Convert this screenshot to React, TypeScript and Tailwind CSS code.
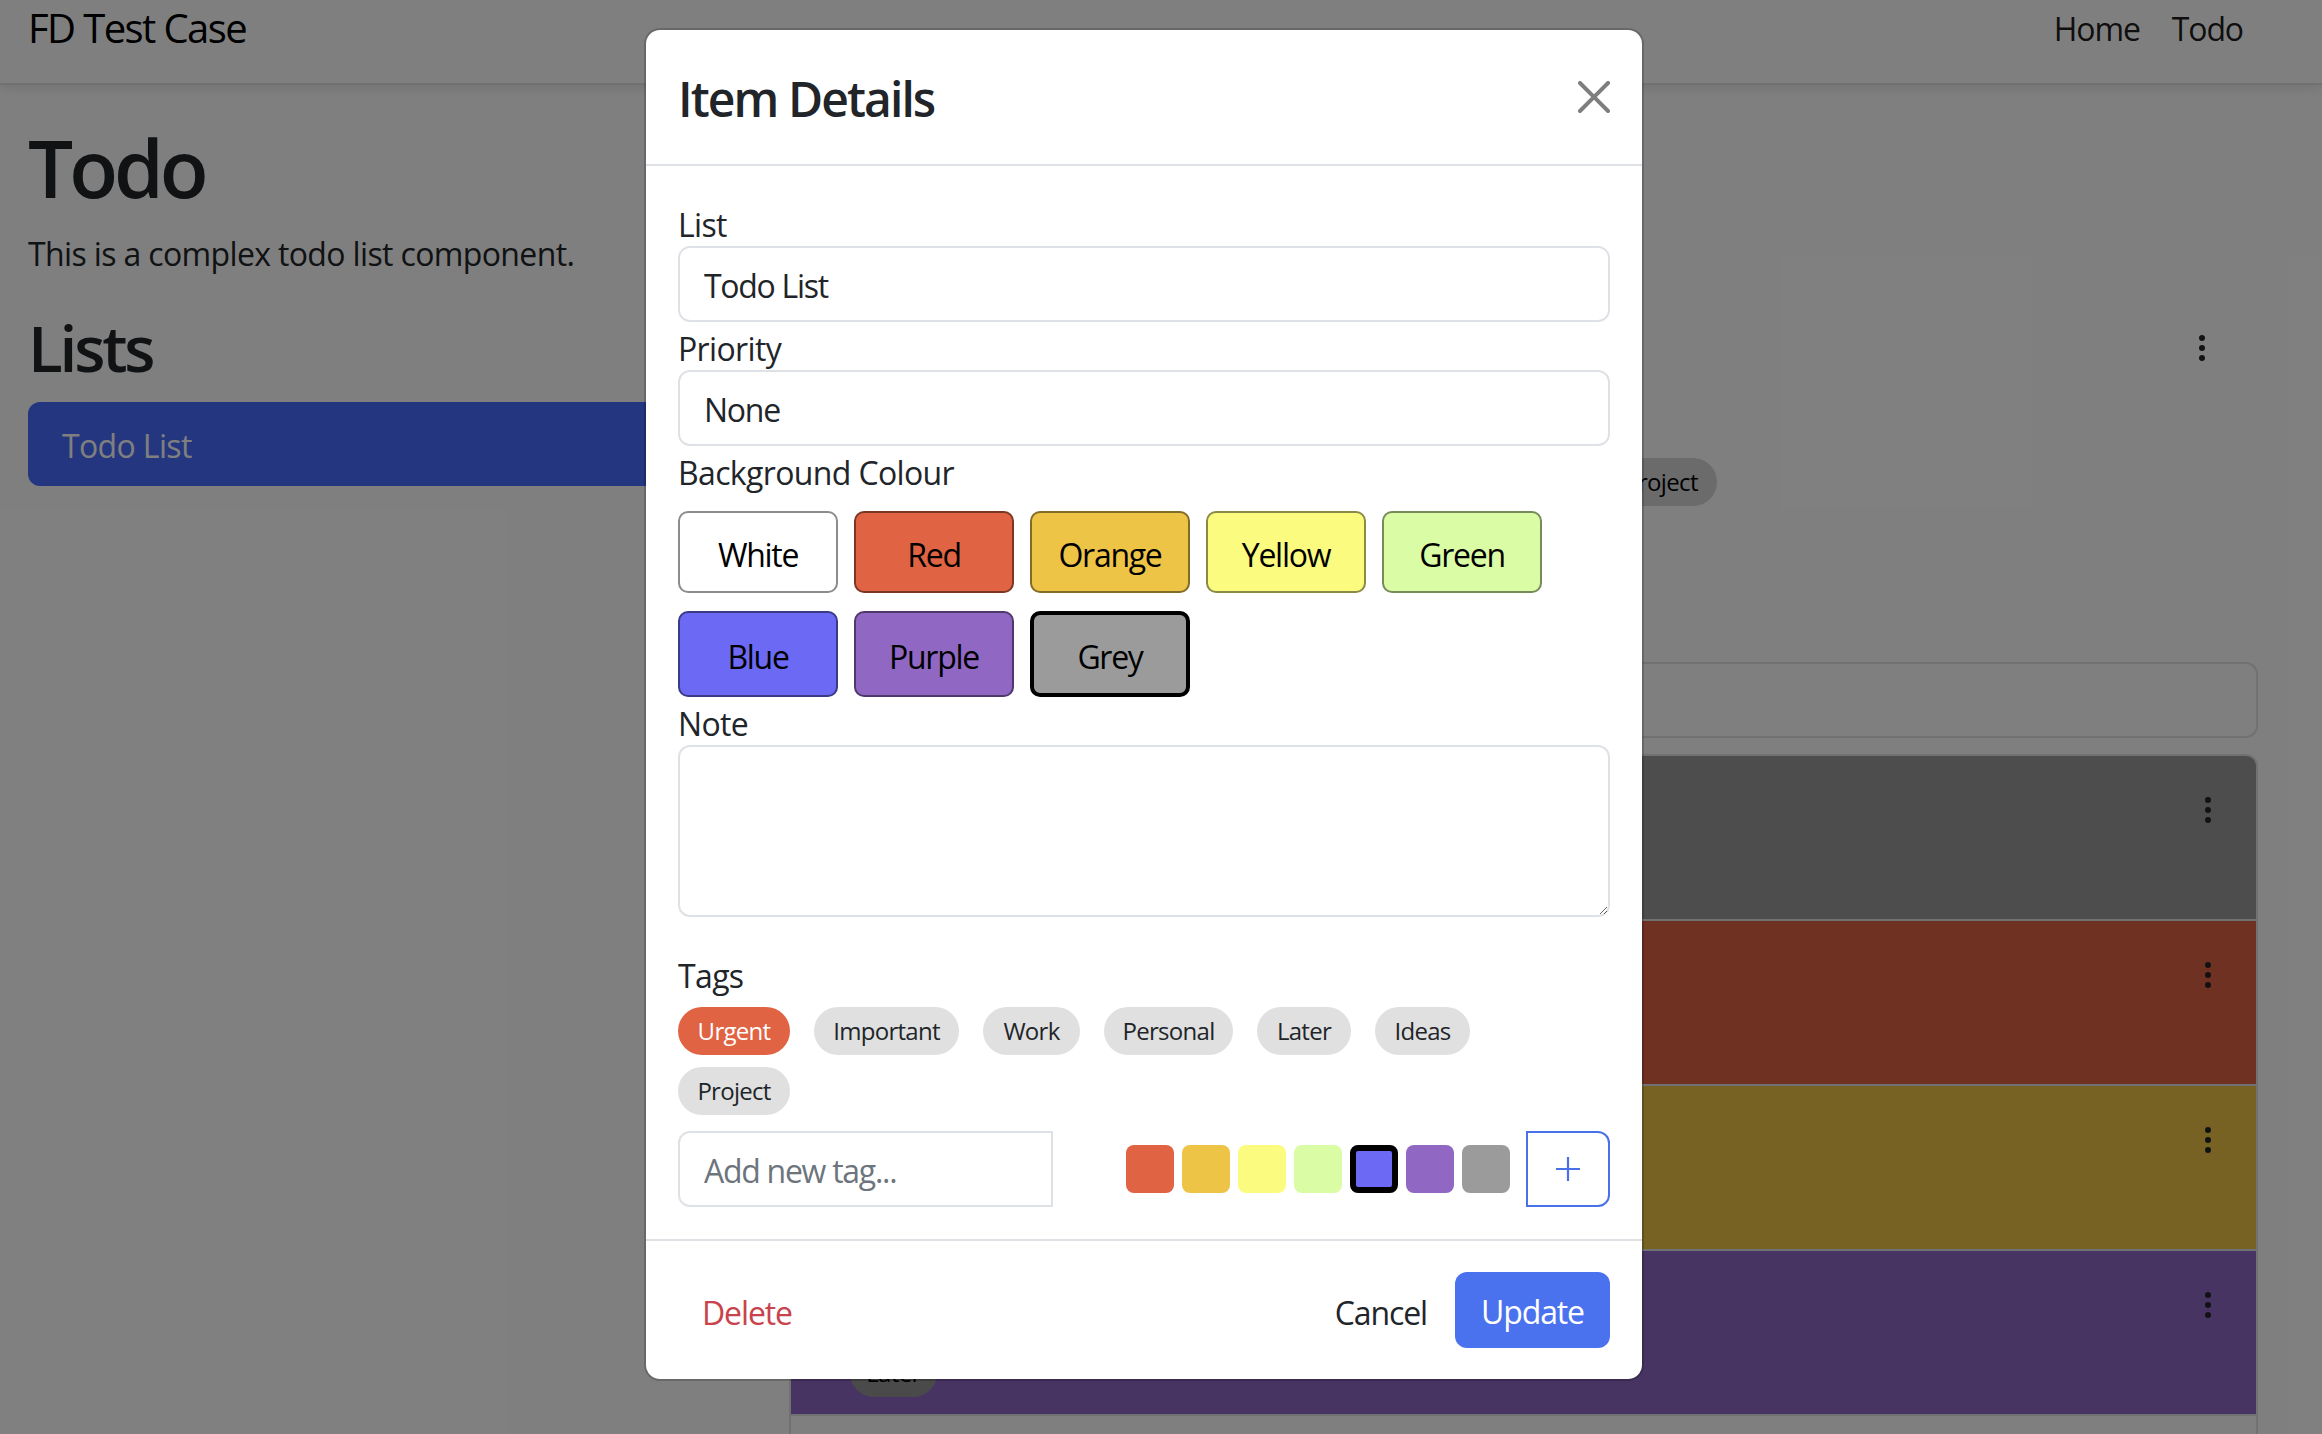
import React from 'react'

const colourButtons = [
  { name: 'White', cls: 'bg-white border-2 border-black/45' },
  { name: 'Red', cls: 'bg-[#e06343] border-2 border-black/45' },
  { name: 'Orange', cls: 'bg-[#eec446] border-2 border-black/45' },
  { name: 'Yellow', cls: 'bg-[#fbfc7f] border-2 border-black/45' },
  { name: 'Green', cls: 'bg-[#dafca5] border-2 border-black/45' },
  { name: 'Blue', cls: 'bg-[#6c6af5] border-2 border-black/45' },
  { name: 'Purple', cls: 'bg-[#9068c4] border-2 border-black/45' },
  { name: 'Grey', cls: 'bg-[#9b9b9b] border-4 border-black' },
]

const swatches = [
  'bg-[#e06343]',
  'bg-[#eec446]',
  'bg-[#fbfc7f]',
  'bg-[#dafca5]',
  'bg-[#6c6af5] border-[6px] border-black',
  'bg-[#9068c4]',
  'bg-[#9b9b9b]',
]

const tags = [
  { name: 'Urgent', w: 'w-[112px]', active: true },
  { name: 'Important', w: 'w-[145px]' },
  { name: 'Work', w: 'w-[97px]' },
  { name: 'Personal', w: 'w-[129px]' },
  { name: 'Later', w: 'w-[94px]' },
  { name: 'Ideas', w: 'w-[95px]' },
  { name: 'Project', w: 'w-[112px]' },
]

// rows of the list behind the modal; only their right ends show
const items = [
  { id: 1, bg: 'bg-[#9a9a9a] rounded-t-[12px]', tag: '' },
  { id: 2, bg: 'bg-[#de6444]', tag: '' },
  { id: 3, bg: 'bg-[#eec446]', tag: '' },
  { id: 4, bg: 'bg-[#9068c4]', tag: 'Later' },
  { id: 5, bg: 'bg-white', tag: '' },
]

const label = 'block h-[48px] pt-[3px] text-[32px] leading-[48px]'
const field = 'block h-[76px] w-full rounded-[12px] border-2 border-[#dee2e6] px-[24px] pt-[3px] text-[32px] tracking-[-0.04em] text-[#212529] outline-none'

function Kebab() {
  return (
    <svg width="32" height="32" viewBox="0 0 16 16" fill="currentColor" className="text-[#212529]">
      <path d="M9.5 13a1.5 1.5 0 1 1-3 0 1.5 1.5 0 0 1 3 0m0-5a1.5 1.5 0 1 1-3 0 1.5 1.5 0 0 1 3 0m0-5a1.5 1.5 0 1 1-3 0 1.5 1.5 0 0 1 3 0" />
    </svg>
  )
}

export default function App() {
  return (
    <div className="relative h-[1434px] overflow-hidden bg-white font-['Open_Sans',sans-serif] tracking-[-0.04em] text-[#212529]">
      {/* navbar */}
      <nav className="flex h-[85px] items-start justify-between border-b-2 border-[#dee2e6] pl-[28px] pr-[63px] shadow-[0_2px_12px_rgba(0,0,0,0.12)]">
        <span className="mt-[8px] text-[40px] leading-[40px] tracking-[-0.04em] text-black">FD Test Case</span>
        <div className="mt-[13px] flex text-[32px] leading-[32px] tracking-[-0.035em] text-black/90">
          <span className="px-[16px]">Home</span>
          <span className="px-[16px]">Todo</span>
        </div>
      </nav>

      <main className="pl-[28px] pr-[64px] pt-[34px]">
        <h1 className="mb-[14px] text-[80px] font-semibold leading-[96px] tracking-[-0.05em]">Todo</h1>
        <p className="mb-[32px] pt-[2px] text-[32px] leading-[46px]">This is a complex todo list component.</p>

        <div className="flex gap-[24px]">
          <div className="w-[737px]">
            <h2 className="mb-[16px] text-[64px] font-semibold leading-[77px] tracking-[-0.05em]">Lists</h2>
            <div className="rounded-[12px] border-2 border-[#466cfe] bg-[#466cfe] px-[32px] pb-[14px] pt-[18px] text-[32px] leading-[48px] text-white">Todo List</div>
          </div>

          <div className="flex-1">
            <div className="flex h-[77px] items-center justify-end">
              <button className="mr-[40px]"><Kebab /></button>
            </div>
            <div className="mt-[72px] flex gap-x-[24px]">
              {tags.map(t => (
                <span key={t.name} className={`${t.w} flex h-[48px] items-center justify-center rounded-full bg-[#d6d6d6] text-[24px] text-black`}>{t.name === 'Project' ? t.name : ''}</span>
              ))}
            </div>
            <div className="mt-[156px] h-[76px] rounded-[12px] border-2 border-[#dee2e6]" />

            <div className="mt-[16px]">
              {items.map(it => (
                <div key={it.id} className={`${it.bg} flex h-[165px] justify-between border-x-2 border-t-2 border-[#dee2e6] pl-[59px] pr-[32px]`}>
                  <div className="pt-[98px]">
                    {it.tag && (
                      <span className="flex h-[48px] w-[87px] items-center justify-center rounded-full bg-[#959595] text-[24px] text-black">{it.tag}</span>
                    )}
                  </div>
                  <div className="pt-[38px]"><Kebab /></div>
                </div>
              ))}
            </div>
          </div>
        </div>
      </main>

      {/* backdrop */}
      <div className="absolute inset-0 bg-black/50" />

      {/* modal */}
      <div className="absolute left-[644px] top-[28px] w-[1000px] rounded-[16px] border-2 border-black/[0.175] bg-white bg-clip-padding">
        <div className="flex h-[136px] items-center justify-between border-b-2 border-[#dee2e6] px-[32px]">
          <h4 className="mt-[4px] text-[48px] font-semibold leading-[58px] tracking-[-0.04em]">Item Details</h4>
          <button className="opacity-50">
            <svg width="32" height="32" viewBox="0 0 16 16" fill="#000">
              <path d="M.293.293a1 1 0 0 1 1.414 0L8 6.586 14.293.293a1 1 0 1 1 1.414 1.414L9.414 8l6.293 6.293a1 1 0 0 1-1.414 1.414L8 9.414l-6.293 6.293a1 1 0 0 1-1.414-1.414L6.586 8 .293 1.707a1 1 0 0 1 0-1.414" />
            </svg>
          </button>
        </div>

        <div className="px-[32px] py-[32px]">
          <label className={label}>List</label>
          <input readOnly value="Todo List" className={field} />
          <label className={label}>Priority</label>
          <input readOnly value="None" className={field} />
          <label className={label}>Background Colour</label>
          <div className="mt-[17px] flex flex-wrap gap-x-[16px] gap-y-[18px]">
            {colourButtons.map(c => (
              <button key={c.name} className={`${c.cls} flex w-[160px] items-center justify-center rounded-[10px] pb-[12px] pt-[18px] text-[32px] leading-[48px] tracking-[-0.04em] text-black`}>{c.name}</button>
            ))}
          </div>
          <label className={label}>Note</label>
          <textarea className="mb-[32px] block h-[172px] w-full rounded-[12px] border-2 border-[#dee2e6] px-[24px] py-[12px] text-[32px] outline-none" />

          <label className={label}>Tags</label>
          <div className="mt-[10px] flex w-[900px] flex-wrap gap-x-[24px] gap-y-[12px]">
            {tags.map(t => (
              <span key={t.name} className={`${t.w} flex h-[48px] items-center justify-center rounded-full text-[24px] tracking-[-0.03em] ${t.active ? 'bg-[#e06343] text-white' : 'bg-[#e0e0e0] text-[#212529]'}`}>{t.name}</span>
            ))}
          </div>

          <div className="mt-[16px] flex h-[76px]">
            <input placeholder="Add new tag..." className="w-[375px] rounded-l-[12px] border-2 border-[#dee2e6] px-[24px] pt-[3px] text-[32px] tracking-[-0.04em] outline-none placeholder:text-[#6c757d]" />
            <div className="flex flex-1 items-center justify-end gap-[8px] pr-[16px]">
              {swatches.map(s => (
                <span key={s} className={`${s} h-[48px] w-[48px] rounded-[8px]`} />
              ))}
            </div>
            <button className="flex w-[84px] items-center justify-center rounded-r-[12px] border-2 border-[#4a72e8]">
              <svg width="26" height="26" viewBox="0 0 26 26" stroke="#4a72e8" strokeWidth="2.2">
                <path d="M13 1v24M1 13h24" />
              </svg>
            </button>
          </div>
        </div>

        <div className="flex h-[140px] items-center justify-between border-t-2 border-[#dee2e6] px-[32px]">
          <button className="px-[24px] pt-[5px] text-[32px] leading-[48px] tracking-[-0.035em] text-[#c9434d]">Delete</button>
          <div className="flex items-center">
            <button className="mr-[4px] px-[24px] pt-[5px] text-[32px] leading-[48px] tracking-[-0.035em] text-[#212529]">Cancel</button>
            <button className="h-[76px] w-[155px] rounded-[12px] bg-[#4a72ee] pt-[4px] text-[32px] tracking-[-0.035em] text-white">Update</button>
          </div>
        </div>
      </div>
    </div>
  )
}
